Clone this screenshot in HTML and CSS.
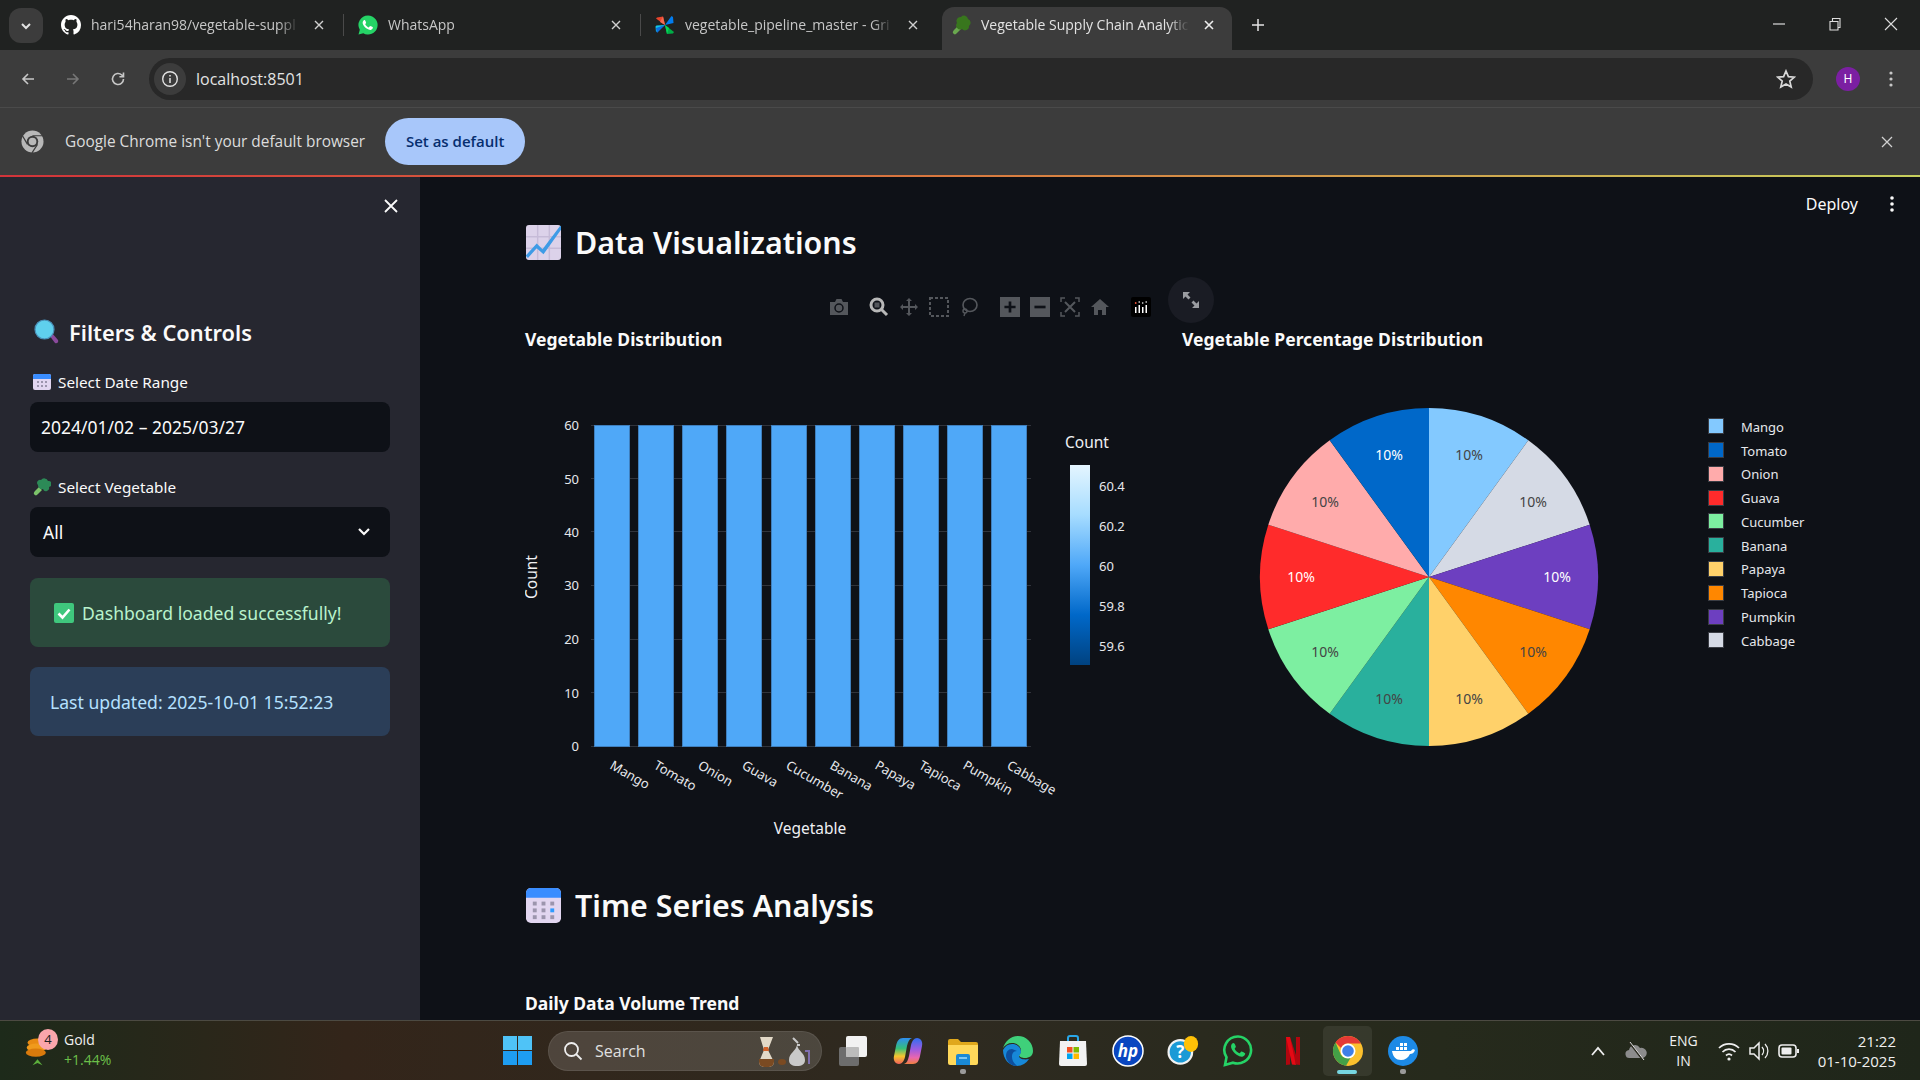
FILE: index.html
```html
<!DOCTYPE html>
<html>
<head>
    <meta charset="utf-8">
    <title>Vegetable Supply Chain Analytics</title>
    <link rel="stylesheet" href="styles.css">
</head>
<body>
<div class="screen">

    <!-- browser tabs -->
    <div class="tabstrip">
        <div class="tab-list">
            <svg width="14" height="14" viewBox="0 0 14 14"><path d="M3 5l4 4 4-4" fill="none" stroke="#e3e3e3" stroke-width="2"/></svg>
        </div>
        <div class="tab">
            <svg class="tab-icon" viewBox="0 0 16 16"><path fill="#fff" d="M8 0C3.58 0 0 3.58 0 8c0 3.54 2.29 6.53 5.47 7.59.4.07.55-.17.55-.38 0-.19-.01-.82-.01-1.49-2.01.37-2.53-.49-2.69-.94-.09-.23-.48-.94-.82-1.13-.28-.15-.68-.52-.01-.53.63-.01 1.08.58 1.23.82.72 1.21 1.87.87 2.33.66.07-.52.28-.87.51-1.07-1.78-.2-3.64-.89-3.64-3.95 0-.87.31-1.59.82-2.15-.08-.2-.36-1.02.08-2.12 0 0 .67-.21 2.2.82.64-.18 1.32-.27 2-.27s1.36.09 2 .27c1.53-1.04 2.2-.82 2.2-.82.44 1.1.16 1.92.08 2.12.51.56.82 1.27.82 2.15 0 3.07-1.87 3.75-3.65 3.95.29.25.54.73.54 1.48 0 1.07-.01 1.93-.01 2.2 0 .21.15.46.55.38A8.01 8.01 0 0 0 16 8c0-4.42-3.58-8-8-8z"/></svg>
            <span class="tab-title">hari54haran98/vegetable-suppl</span>
            <svg class="tab-close" viewBox="0 0 12 12"><path d="M2 2l8 8M10 2l-8 8" stroke="#d0d0d0" stroke-width="1.4"/></svg>
        </div>
        <div class="tab">
            <svg class="tab-icon" viewBox="0 0 20 20"><path fill="#25d366" d="M10 .5a9.5 9.5 0 0 0-8.2 14.3L.5 19.5l4.8-1.3A9.5 9.5 0 1 0 10 .5z"/><path fill="#fff" d="M6.8 4.9c-.3 0-.8.1-1.2.6-.5.6-1.2 1.7-.8 3.2.5 1.7 1.9 3.6 3.8 4.9 1.9 1.3 3.6 1.6 4.6 1.2 1-.4 1.7-1.3 1.7-2.2 0-.4-2.4-1.6-2.8-1.5-.4.1-.9 1.2-1.3 1.3-.6.1-3.3-1.8-3.6-3.2 0-.4.9-1 .9-1.5 0-.3-.9-2.8-1.3-2.800z"/></svg>
            <span class="tab-title">WhatsApp</span>
            <svg class="tab-close" viewBox="0 0 12 12"><path d="M2 2l8 8M10 2l-8 8" stroke="#d0d0d0" stroke-width="1.4"/></svg>
        </div>
        <div class="tab">
            <svg class="tab-icon" viewBox="0 0 20 20"><path fill="#e8452c" d="M10 10L1 3.500 2 2.500 8 1.500z"/><path fill="#f26a52" d="M10 10L5 7l3-5.500z"/><path fill="#017cee" d="M10 10l6.500-9 1.500 1 .5 6z"/><path fill="#11c7e8" d="M10 10L1 17l-.5-5.500 1-1z"/><path fill="#0a6fe0" d="M10 10l-8 8L1 13z"/><path fill="#00ad46" d="M10 10l9 7-1 1.500-6 .5z"/><path fill="#04d659" d="M10 10l4 3-2 6z"/></svg>
            <span class="tab-title">vegetable_pipeline_master - Gri</span>
            <svg class="tab-close" viewBox="0 0 12 12"><path d="M2 2l8 8M10 2l-8 8" stroke="#d0d0d0" stroke-width="1.4"/></svg>
        </div>
        <div class="tab tab-active">
            <svg class="tab-icon" viewBox="0 0 20 20"><path fill="#6aa84f" d="M3 19c-2-1-1-3 0-4l4-4 3 3-4 4c-1 1-2 2-3 1z"/><path fill="#38761d" d="M6 8a4 4 0 0 1 4-6 4 4 0 0 1 7 2 4 4 0 0 1 1 7 4 4 0 0 1-7 3 4 4 0 0 1-5-6z"/></svg>
            <span class="tab-title">Vegetable Supply Chain Analytic</span>
            <svg class="tab-close" viewBox="0 0 12 12"><path d="M2 2l8 8M10 2l-8 8" stroke="#eee" stroke-width="1.6"/></svg>
        </div>
        <svg class="new-tab" viewBox="0 0 14 14"><path d="M7 1v12M1 7h12" stroke="#e3e3e3" stroke-width="1.5"/></svg>
        <div class="window-controls">
            <svg viewBox="0 0 14 14"><path d="M1 7h12" stroke="#ddd" stroke-width="1.2"/></svg>
            <svg viewBox="0 0 14 14"><path d="M2 4.5h8v8.5h-8zM4.5 4.5v-3h7.5v9h-2" fill="none" stroke="#ddd" stroke-width="1.1"/></svg>
            <svg viewBox="0 0 14 14"><path d="M1 1l12 12M13 1l-12 12" stroke="#ddd" stroke-width="1.1"/></svg>
        </div>
    </div>

    <!-- address bar -->
    <div class="toolbar">
        <svg class="nav-icon" viewBox="0 0 16 16"><path d="M14 8H3M8 3L3 8l5 5" fill="none" stroke="#c7c7c7" stroke-width="1.6"/></svg>
        <svg class="nav-icon" viewBox="0 0 16 16"><path d="M2 8h11M8 3l5 5-5 5" fill="none" stroke="#777" stroke-width="1.6"/></svg>
        <svg class="nav-icon" viewBox="0 0 16 16"><path d="M13.5 8A5.5 5.5 0 1 1 11.8 4L13.5 5.6M13.5 1.5v4.2H9.4" fill="none" stroke="#c7c7c7" stroke-width="1.6"/></svg>
        <div class="omnibox">
            <div class="site-info">
                <svg width="18" height="18" viewBox="0 0 18 18"><circle cx="9" cy="9" r="7.3" fill="none" stroke="#e3e3e3" stroke-width="1.4"/><path d="M9 8v5M9 5v1.6" stroke="#e3e3e3" stroke-width="1.5"/></svg>
            </div>
            <span class="url">localhost:8501</span>
            <svg class="star" viewBox="0 0 20 20"><path d="M10 2l2.4 5.6 6 .5-4.6 4 1.4 5.9L10 14.9 4.800 18l1.400-5.900-4.600-4 6-.5z" fill="none" stroke="#d8d8d8" stroke-width="1.7"/></svg>
        </div>
        <div class="avatar">H</div>
        <svg class="menu-dots" viewBox="0 0 4 18"><circle cx="2" cy="3" r="1.6"/><circle cx="2" cy="9" r="1.6"/><circle cx="2" cy="15" r="1.6"/></svg>
    </div>

    <!-- default browser notice -->
    <div class="infobar">
        <svg class="chrome-mono" viewBox="0 0 24 24"><circle cx="12" cy="12" r="11.500" fill="#b8b8b8"/><circle cx="12" cy="12" r="6" fill="#3c3c3c"/><circle cx="12" cy="12" r="4" fill="#b8b8b8"/><path d="M12 6h11M6.800 15L1.500 6M17.200 15L11.500 23.800" stroke="#3c3c3c" stroke-width="1.300" fill="none"/></svg>
        <span class="infobar-text">Google Chrome isn't your default browser</span>
        <div class="infobar-btn">Set as default</div>
        <svg class="infobar-close" viewBox="0 0 12 12"><path d="M1 1l10 10M11 1L1 11" stroke="#d0d0d0" stroke-width="1.3"/></svg>
    </div>
    <div class="rainbow"></div>

    <!-- streamlit app -->
    <div class="app">
        <div class="sidebar">
            <svg class="side-close" viewBox="0 0 16 16"><path d="M2 2l12 12M14 2L2 14" stroke="#fafafa" stroke-width="1.800"/></svg>
            <div class="side-head">
                <svg class="emoji-lg" viewBox="0 0 26 26"><path d="M15 16l3-2 6 7c1 2-1 4-3 3z" fill="#8a4a9c"/><circle cx="10.500" cy="10.500" r="9.500" fill="#5fd0ee"/><circle cx="10.500" cy="10.500" r="9.500" fill="none" stroke="#4a90b8" stroke-width="1.200"/></svg>
                <span>Filters &amp; Controls</span>
            </div>
            <div class="field-label">
                <svg class="emoji-sm" viewBox="0 0 18 16"><rect width="18" height="16" rx="2" fill="#e2d6f0"/><path d="M0 5V2a2 2 0 0 1 2-2h14a2 2 0 0 1 2 2v3z" fill="#3a8dff"/><g fill="#9c95ad"><rect x="4" y="7" width="2" height="2"/><rect x="8" y="7" width="2" height="2"/><rect x="12" y="7" width="2" height="2"/><rect x="4" y="11" width="2" height="2"/><rect x="8" y="11" width="2" height="2"/><rect x="12" y="11" width="2" height="2"/></g></svg>
                Select Date Range
            </div>
            <div class="field">2024/01/02 – 2025/03/27</div>
            <div class="field-label">
                <svg class="emoji-sm" viewBox="0 0 18 18"><path d="M2 17c-2-1-1-3 0-4l4-4 3 3-4 4c-1 1-2 2-3 1z" fill="#7cc36a"/><path d="M5 7a3 3 0 0 1 3-5 4 4 0 0 1 7 1 3 3 0 0 1 1 6 3 3 0 0 1-6 2 4 4 0 0 1-5-4z" fill="#2c8a57"/></svg>
                Select Vegetable
            </div>
            <div class="field field-select">
                All
                <svg width="14" height="10" viewBox="0 0 14 10"><path d="M2 2l5 5 5-5" fill="none" stroke="#fafafa" stroke-width="2.200"/></svg>
            </div>
            <div class="alert alert-success">
                <svg class="emoji-check" viewBox="0 0 20 20"><rect width="20" height="20" rx="2" fill="#3fc77d"/><path d="M4.500 10.500l4 4 7-8" fill="none" stroke="#fff" stroke-width="2.600"/></svg>
                Dashboard loaded successfully!
            </div>
            <div class="alert alert-info">Last updated: 2025-10-01 15:52:23</div>
        </div>

        <div class="main">
            <div class="deploy-bar">
                <span>Deploy</span>
                <svg width="4" height="16" viewBox="0 0 4 16"><g fill="#fafafa"><circle cx="2" cy="2" r="1.800"/><circle cx="2" cy="8" r="1.800"/><circle cx="2" cy="14" r="1.800"/></g></svg>
            </div>

            <h2 class="section-title">
                <svg class="emoji-h2" viewBox="0 0 36 36"><rect width="36" height="36" rx="3" fill="#dcd2ea"/><path d="M0 12h36M0 24h36M12 0v36M24 0v36" stroke="#c6bbd8" stroke-width="1.500"/><path d="M0 32V31L11 19l6 6L35 1h1v4L18 30l-7-6L2 34z" fill="#3e9be6"/></svg>
                Data Visualizations
            </h2>

            <div class="charts">
                <div class="chart-col">
                    <div class="chart-title">Vegetable Distribution</div>
                    <svg class="chart" viewBox="525 352 641 510">
                        <defs>
                            <linearGradient id="scale" x1="0" y1="0" x2="0" y2="1">
                                <stop offset="0" stop-color="#e4f5ff"/>
                                <stop offset=".25" stop-color="#a6dcff"/>
                                <stop offset=".5" stop-color="#4fa8f8"/>
                                <stop offset=".75" stop-color="#0068c9"/>
                                <stop offset="1" stop-color="#004280"/>
                            </linearGradient>
                        </defs>
                        <g stroke="#31343c" stroke-width="1">
                            <path d="M591 425.500h440M591 478.500h440M591 531.500h440M591 585.500h440M591 639.500h440M591 692.500h440M591 746.500h440"/>
                        </g>
                        <g fill="#4fa8f8" stroke="#3f7fbd" stroke-width="1">
                            <rect x="594.500" y="425.500" width="35" height="321"/>
                            <rect x="638.500" y="425.500" width="35" height="321"/>
                            <rect x="682.500" y="425.500" width="35" height="321"/>
                            <rect x="726.500" y="425.500" width="35" height="321"/>
                            <rect x="771.500" y="425.500" width="35" height="321"/>
                            <rect x="815.500" y="425.500" width="35" height="321"/>
                            <rect x="859.500" y="425.500" width="35" height="321"/>
                            <rect x="903.500" y="425.500" width="35" height="321"/>
                            <rect x="947.500" y="425.500" width="35" height="321"/>
                            <rect x="991.500" y="425.500" width="35" height="321"/>
                        </g>
                        <g class="tick" text-anchor="end">
                            <text x="579" y="430">60</text>
                            <text x="579" y="484">50</text>
                            <text x="579" y="537">40</text>
                            <text x="579" y="590">30</text>
                            <text x="579" y="644">20</text>
                            <text x="579" y="698">10</text>
                            <text x="579" y="751">0</text>
                        </g>
                        <g class="tick">
                            <text transform="translate(609 768) rotate(30)">Mango</text>
                            <text transform="translate(653 768) rotate(30)">Tomato</text>
                            <text transform="translate(697 768) rotate(30)">Onion</text>
                            <text transform="translate(741 768) rotate(30)">Guava</text>
                            <text transform="translate(785 768) rotate(30)">Cucumber</text>
                            <text transform="translate(829 768) rotate(30)">Banana</text>
                            <text transform="translate(874 768) rotate(30)">Papaya</text>
                            <text transform="translate(918 768) rotate(30)">Tapioca</text>
                            <text transform="translate(962 768) rotate(30)">Pumpkin</text>
                            <text transform="translate(1006 768) rotate(30)">Cabbage</text>
                        </g>
                        <text class="axis" x="810" y="834" text-anchor="middle">Vegetable</text>
                        <text class="axis" transform="translate(537 577) rotate(-90)" text-anchor="middle">Count</text>
                        <text class="axis" x="1065" y="448">Count</text>
                        <rect x="1070" y="465" width="20" height="200" fill="url(#scale)"/>
                        <g class="tick">
                            <text x="1099" y="491">60.4</text>
                            <text x="1099" y="531">60.2</text>
                            <text x="1099" y="571">60</text>
                            <text x="1099" y="611">59.8</text>
                            <text x="1099" y="651">59.6</text>
                        </g>
                    </svg>
                    <!-- plotly modebar -->
                    <div class="modebar">
                        <svg class="mb mb-cam" viewBox="0 0 20 18"><path d="M1 4h5l1.500-3h5L14 4h5v13H1z" fill="#54575c"/><circle cx="10" cy="10" r="4" fill="none" stroke="#0e1117" stroke-width="1.500"/></svg>
                        <svg class="mb mb-active" viewBox="0 0 20 20"><circle cx="8" cy="8" r="6" fill="none" stroke="#b8b8b8" stroke-width="3"/><rect x="5.500" y="5.500" width="5" height="5" fill="#54575c"/><path d="M12 12l6 6" stroke="#b8b8b8" stroke-width="3"/></svg>
                        <svg class="mb" viewBox="0 0 20 20"><path d="M10 1l3 3h-2v5h5V7l3 3-3 3v-2h-5v5h2l-3 3-3-3h2v-5H4v2l-3-3 3-3v2h5V4H7z" fill="#54575c"/></svg>
                        <svg class="mb" viewBox="0 0 20 20"><path d="M1 1h18v18H1z" fill="none" stroke="#54575c" stroke-width="2" stroke-dasharray="3 2"/></svg>
                        <svg class="mb" viewBox="0 0 20 20"><ellipse cx="11" cy="8" rx="7" ry="6.500" fill="none" stroke="#54575c" stroke-width="1.600"/><circle cx="6" cy="14" r="2" fill="none" stroke="#54575c" stroke-width="1.400"/><path d="M6 16l-1 3" stroke="#54575c" stroke-width="1.400"/></svg>
                        <svg class="mb mb-gap" viewBox="0 0 18 18"><rect width="18" height="18" fill="#54575c"/><path d="M9 4v10M4 9h10" stroke="#0e1117" stroke-width="2.400"/></svg>
                        <svg class="mb" viewBox="0 0 18 18"><rect width="18" height="18" fill="#54575c"/><path d="M4 9h10" stroke="#0e1117" stroke-width="2.400"/></svg>
                        <svg class="mb" viewBox="0 0 20 20"><path d="M5 1H1v4M15 1h4v4M5 19H1v-4M15 19h4v-4" fill="none" stroke="#54575c" stroke-width="1.500"/><path d="M5 5l10 10M15 5L5 15" stroke="#54575c" stroke-width="2"/></svg>
                        <svg class="mb" viewBox="0 0 20 20"><path d="M10 2L1 10h3v8h4v-5h4v5h4v-8h3z" fill="#54575c"/></svg>
                        <svg class="mb mb-logo" viewBox="0 0 20 20"><rect width="20" height="20" rx="2" fill="#000"/><g fill="#fff"><rect x="4" y="10" width="1.500" height="6"/><rect x="7.500" y="8" width="1.500" height="8"/><rect x="11" y="10" width="1.500" height="6"/><rect x="14.500" y="8" width="1.500" height="8"/></g><g fill="#ef553b"><circle cx="4.700" cy="6" r=".9"/></g><g fill="#fff"><circle cx="8.200" cy="5" r=".8"/><circle cx="11.700" cy="6" r=".8"/><circle cx="15.200" cy="5" r=".8"/></g></svg>
                    </div>
                    <div class="fullscreen-btn">
                        <svg width="20" height="20" viewBox="0 0 20 20"><path d="M2 2h7L6.500 4.500l3 3-2 2-3-3L2 9zM18 18h-7l2.500-2.500-3-3 2-2 3 3L18 11z" fill="#9a9ca1"/></svg>
                    </div>
                </div>

                <div class="chart-col">
                    <div class="chart-title">Vegetable Percentage Distribution</div>
                    <svg class="chart" viewBox="1182 352 640 510">
                        <g transform="translate(1429 577)">
                            <path fill="#83c9ff" d="M0 0L0 -169A169 169 0 0 1 99.300 -136.700Z"/>
                            <path fill="#d5dae5" d="M0 0L99.300 -136.700A169 169 0 0 1 160.700 -52.200Z"/>
                            <path fill="#6d3fc0" d="M0 0L160.700 -52.200A169 169 0 0 1 160.700 52.200Z"/>
                            <path fill="#ff8700" d="M0 0L160.700 52.200A169 169 0 0 1 99.300 136.700Z"/>
                            <path fill="#ffd16a" d="M0 0L99.300 136.700A169 169 0 0 1 0 169Z"/>
                            <path fill="#29b09d" d="M0 0L0 169A169 169 0 0 1 -99.300 136.700Z"/>
                            <path fill="#7defa1" d="M0 0L-99.300 136.700A169 169 0 0 1 -160.700 52.200Z"/>
                            <path fill="#ff2b2b" d="M0 0L-160.700 52.200A169 169 0 0 1 -160.700 -52.200Z"/>
                            <path fill="#ffabab" d="M0 0L-160.700 -52.200A169 169 0 0 1 -99.300 -136.700Z"/>
                            <path fill="#0068c9" d="M0 0L-99.300 -136.700A169 169 0 0 1 0 -169Z"/>
                            <g class="pie-label" text-anchor="middle">
                                <text x="40" y="-117">10%</text>
                                <text x="104" y="-70">10%</text>
                                <text class="pie-light" x="128" y="5">10%</text>
                                <text x="104" y="80">10%</text>
                                <text x="40" y="127">10%</text>
                                <text x="-40" y="127">10%</text>
                                <text x="-104" y="80">10%</text>
                                <text class="pie-light" x="-128" y="5">10%</text>
                                <text x="-104" y="-70">10%</text>
                                <text class="pie-light" x="-40" y="-117">10%</text>
                            </g>
                        </g>
                        <g stroke="#3a3d44" stroke-width="1">
                            <rect x="1708.500" y="418.500" width="15" height="15" fill="#83c9ff"/>
                            <rect x="1708.500" y="442.500" width="15" height="15" fill="#0068c9"/>
                            <rect x="1708.500" y="466.500" width="15" height="15" fill="#ffabab"/>
                            <rect x="1708.500" y="490.500" width="15" height="15" fill="#ff2b2b"/>
                            <rect x="1708.500" y="513.500" width="15" height="15" fill="#7defa1"/>
                            <rect x="1708.500" y="537.500" width="15" height="15" fill="#29b09d"/>
                            <rect x="1708.500" y="561.500" width="15" height="15" fill="#ffd16a"/>
                            <rect x="1708.500" y="585.500" width="15" height="15" fill="#ff8700"/>
                            <rect x="1708.500" y="609.500" width="15" height="15" fill="#6d3fc0"/>
                            <rect x="1708.500" y="632.500" width="15" height="15" fill="#d5dae5"/>
                        </g>
                        <g class="tick">
                            <text x="1741" y="432">Mango</text>
                            <text x="1741" y="456">Tomato</text>
                            <text x="1741" y="479">Onion</text>
                            <text x="1741" y="503">Guava</text>
                            <text x="1741" y="527">Cucumber</text>
                            <text x="1741" y="551">Banana</text>
                            <text x="1741" y="574">Papaya</text>
                            <text x="1741" y="598">Tapioca</text>
                            <text x="1741" y="622">Pumpkin</text>
                            <text x="1741" y="646">Cabbage</text>
                        </g>
                    </svg>
                </div>
            </div>

            <h2 class="section-title section-two">
                <svg class="emoji-h2" viewBox="0 0 36 36"><rect width="36" height="36" rx="5" fill="#e2d6f0"/><path d="M0 10V5a5 5 0 0 1 5-5h26a5 5 0 0 1 5 5v5z" fill="#3a8dff"/><g fill="#9c95ad"><rect x="7" y="14" width="4" height="4"/><rect x="16" y="14" width="4" height="4"/><rect x="25" y="14" width="4" height="4"/><rect x="7" y="21" width="4" height="4"/><rect x="16" y="21" width="4" height="4"/><rect x="25" y="21" width="4" height="4" fill="#2f9bff"/><rect x="7" y="28" width="4" height="4"/><rect x="16" y="28" width="4" height="4"/><rect x="25" y="28" width="4" height="4"/></g></svg>
                Time Series Analysis
            </h2>
            <div class="chart-title trend-title">Daily Data Volume Trend</div>
        </div>
    </div>

    <!-- windows taskbar -->
    <div class="taskbar">
        <div class="widget">
            <svg class="widget-icon" viewBox="0 0 30 38"><ellipse cx="15" cy="9" rx="12" ry="5" fill="#e88a12"/><ellipse cx="14" cy="15" rx="12" ry="5" fill="#f09a1c"/><ellipse cx="13" cy="21" rx="12" ry="5" fill="#d97a0c"/><path d="M9 36l6-7 6 7-6-2.500z" fill="#5cae3c"/></svg>
            <div class="widget-badge">4</div>
            <div class="widget-text">
                <div>Gold</div>
                <div class="widget-up">+1.44%</div>
            </div>
        </div>

        <svg class="win-logo" viewBox="0 0 29 29"><path d="M0 0h14v14H0z" fill="#4fc3f7"/><path d="M15 0h14v14H15z" fill="#4fc3f7"/><path d="M0 15h14v14H0z" fill="#1e9df2"/><path d="M15 15h14v14H15z" fill="#1e9df2"/></svg>
        <div class="search">
            <svg width="20" height="20" viewBox="0 0 20 20"><circle cx="8.500" cy="8.500" r="6.500" fill="none" stroke="#eee" stroke-width="1.800"/><path d="M13 13l5.500 5.500" stroke="#eee" stroke-width="1.800"/></svg>
            <span>Search</span>
            <svg class="search-art" viewBox="0 0 54 32"><path d="M3 2h13l-5 13 6 12a5 5 0 0 1-5 5H7a5 5 0 0 1-5-5l5-12z" fill="#e2d9c8"/><path d="M2 24h15v3a5 5 0 0 1-5 5H7a5 5 0 0 1-5-5z" fill="#7a4a22"/><path d="M7 12l4 0 1 4-6 0z" fill="#d2622a"/><ellipse cx="25" cy="27" rx="4" ry="3" fill="#7a4a22"/><path d="M40 10c-1 6-8 8-8 15 0 4 3 6 8 6s8-2 8-6c0-7-7-9-8-15z" fill="#c9c9c9"/><path d="M36 3l5 5M40 10h3" stroke="#c9c9c9" stroke-width="2"/><path d="M48 16h4v13" fill="none" stroke="#7f6fb0" stroke-width="2"/></svg>
        </div>

        <div class="task-icons">
            <div class="task-icon">
                <svg viewBox="0 0 30 32"><rect x="1" y="12" width="20" height="19" rx="2" fill="#6d6d6d"/><rect x="8" y="1" width="21" height="21" rx="2" fill="#f2f2f2"/><rect x="8" y="12" width="13" height="10" rx="1" fill="#bcbcbc"/></svg>
            </div>
            <div class="task-icon">
                <svg viewBox="0 0 32 32">
                    <defs>
                        <linearGradient id="copilotLeft" x1="0" y1="0" x2="0" y2="1">
                            <stop offset="0" stop-color="#2f8df0"/>
                            <stop offset=".4" stop-color="#35c07a"/>
                            <stop offset=".7" stop-color="#f6c52e"/>
                            <stop offset="1" stop-color="#f0605a"/>
                        </linearGradient>
                        <linearGradient id="copilotRight" x1="0" y1="0" x2="0" y2="1">
                            <stop offset="0" stop-color="#2f6ff0"/>
                            <stop offset=".45" stop-color="#a05be0"/>
                            <stop offset=".75" stop-color="#e866b0"/>
                            <stop offset="1" stop-color="#f08040"/>
                        </linearGradient>
                    </defs>
                    <path fill="url(#copilotLeft)" d="M11 3h9c-3 1-4 4-5 8l-2 11c-1 4-3 7-6 7-4 0-6-4-5-8l2-10c1-5 3-8 7-8z"/>
                    <path fill="url(#copilotRight)" d="M21 29h-9c3-1 4-4 5-8l2-11c1-4 3-7 6-7 4 0 6 4 5 8l-2 10c-1 5-3 8-7 8z"/>
                </svg>
            </div>
            <div class="task-icon">
                <svg viewBox="0 0 32 32"><path d="M1 6a2 2 0 0 1 2-2h8l3 3h15a2 2 0 0 1 2 2v6H1z" fill="#e0a81c"/><path d="M1 10h30v18a2 2 0 0 1-2 2H3a2 2 0 0 1-2-2z" fill="#ffd85a"/><path d="M9 21a2 2 0 0 1 2-2h10a2 2 0 0 1 2 2v9H9z" fill="#1a89d6"/><path d="M12 23h8" stroke="#9fdcff" stroke-width="1.500"/></svg>
                <i class="task-dot"></i>
            </div>
            <div class="task-icon">
                <svg viewBox="0 0 32 32"><path d="M16 1a15 15 0 0 1 15 15c0 5-4 7-8 7-3 0-6-1-6-3 0-1 2-1 2-4 0-5-4-8-9-8-4 0-7 2-9 5C3 7 8 1 16 1z" fill="#3fd07a"/><path d="M1 15c2-4 5-6 9-6 5 0 9 3 9 8 0 2-2 3-2 4 0 3 5 4 10 3a15 15 0 0 1-12 7C7 31 1 24 1 15z" fill="#1788d8"/><path d="M10 14c-4 0-6 3-6 7 0 5 5 10 11 10 1 0-5-3-5-9 0-3 1-6 5-6z" fill="#0d4f9e"/></svg>
            </div>
            <div class="task-icon">
                <svg viewBox="0 0 30 32"><path d="M10 7V3a2 2 0 0 1 2-2h6a2 2 0 0 1 2 2v4" fill="none" stroke="#29a7e8" stroke-width="2"/><path d="M2 6h26l1 23a2 2 0 0 1-2 2H3a2 2 0 0 1-2-2z" fill="#f2f2f2"/><rect x="9" y="12" width="5.500" height="5.500" fill="#f25022"/><rect x="15.500" y="12" width="5.500" height="5.500" fill="#7fba00"/><rect x="9" y="18.500" width="5.500" height="5.500" fill="#00a4ef"/><rect x="15.500" y="18.500" width="5.500" height="5.500" fill="#ffb900"/></svg>
            </div>
            <div class="task-icon">
                <svg viewBox="0 0 32 32"><circle cx="16" cy="16" r="15" fill="#0a46c0" stroke="#fff" stroke-width="1.500"/><text class="hp-mark" x="16" y="22" text-anchor="middle">hp</text></svg>
            </div>
            <div class="task-icon">
                <svg viewBox="0 0 36 34"><circle cx="15" cy="18" r="14.500" fill="#f2f2f2"/><circle cx="15" cy="18" r="12" fill="#1b9ad6"/><text class="help-mark" x="15" y="25" text-anchor="middle">?</text><ellipse cx="27" cy="9" rx="8" ry="9" fill="#ffc107"/></svg>
            </div>
            <div class="task-icon">
                <svg viewBox="0 0 30 32"><path d="M15 1.500a13.500 13.500 0 0 0-11.500 20.800L2 30l8-2.300A13.500 13.500 0 1 0 15 1.500z" fill="none" stroke="#25d366" stroke-width="2.600"/><path fill="#25d366" d="M10.500 8c-.5 0-1 .2-1.500.8-.7.800-1.300 2.300-.7 4.300.7 2.300 2.700 4.900 5.300 6.700 2.600 1.800 4.900 2.200 6.300 1.700 1.400-.5 2.300-1.800 2.300-3 0-.5-3.300-2.200-3.800-2.100-.5.100-1.200 1.600-1.800 1.800-.8.100-4.500-2.500-4.900-4.400 0-.5 1.200-1.400 1.200-2 0-.4-1.200-3.800-2.400-3.800z"/></svg>
            </div>
            <div class="task-icon">
                <svg viewBox="0 0 16 28" class="netflix"><path d="M1 0h4l6 18V0h4v28l-4-.5L5 10v17.500L1 28z" fill="#b1060f"/><path d="M1 0h4l6 28-4-.5z" fill="#e50914"/></svg>
            </div>
            <div class="task-icon task-current">
                <svg viewBox="0 0 32 32"><circle cx="16" cy="16" r="15" fill="#fbc02d"/><path d="M16 1a15 15 0 0 1 13 7.500H16a7.500 7.500 0 0 0-7 4.500L3.500 7.500A15 15 0 0 1 16 1z" fill="#e53935"/><path d="M9 20l-5.500-12.500A15 15 0 0 0 14 30.800L19 22a7.500 7.500 0 0 1-10-2z" fill="#43a047"/><circle cx="16" cy="16" r="7.500" fill="#fff"/><circle cx="16" cy="16" r="5.800" fill="#3f7fe8"/></svg>
                <i class="task-bar"></i>
            </div>
            <div class="task-icon">
                <svg viewBox="0 0 32 32"><circle cx="16" cy="16" r="15" fill="#1d8ae6"/><path d="M5 16h19c1-2 3-2 4-1-1 3-3 4-5 4-2 4-5 6-9 6-5 0-8-3-9-9z" fill="#fff"/><g fill="#fff"><rect x="9" y="12" width="3" height="3"/><rect x="13" y="12" width="3" height="3"/><rect x="17" y="12" width="3" height="3"/><rect x="13" y="8" width="3" height="3"/><rect x="17" y="8" width="3" height="3"/></g></svg>
                <i class="task-dot"></i>
            </div>
        </div>

        <div class="tray">
            <svg class="tray-caret" viewBox="0 0 16 10"><path d="M2 9l6-7 6 7" fill="none" stroke="#eee" stroke-width="1.800"/></svg>
            <svg class="tray-cloud" viewBox="0 0 22 20"><path d="M5 17a4 4 0 0 1-1-8 6 6 0 0 1 11-2 5 5 0 0 1 3 10z" fill="#8c8c8c"/><path d="M4 1l14 18" stroke="#2a2a1f" stroke-width="2"/><path d="M5 1l14 18" stroke="#ddd" stroke-width="1"/></svg>
            <div class="tray-lang">ENG<br>IN</div>
            <svg class="tray-icon" viewBox="0 0 22 20"><g fill="none" stroke="#eee" stroke-width="1.700"><path d="M1 7a14 14 0 0 1 20 0"/><path d="M4.500 11a9 9 0 0 1 13 0"/><path d="M8 14.500a4.500 4.500 0 0 1 6 0"/></g><circle cx="11" cy="18" r="1.600" fill="#eee"/></svg>
            <svg class="tray-icon" viewBox="0 0 22 20"><path d="M2 7h4l5-5v16l-5-5H2z" fill="none" stroke="#eee" stroke-width="1.500"/><path d="M14 6a6 6 0 0 1 0 8M17 3a10 10 0 0 1 0 14" fill="none" stroke="#eee" stroke-width="1.300"/></svg>
            <svg class="tray-icon" viewBox="0 0 22 20"><rect x="1" y="4" width="17" height="12" rx="3" fill="none" stroke="#eee" stroke-width="1.600"/><rect x="3.500" y="6.500" width="10" height="7" rx="1" fill="#eee"/><rect x="19" y="8" width="2" height="4" fill="#eee"/></svg>
            <div class="tray-clock">21:22<br>01-10-2025</div>
        </div>
    </div>
</div>
</body>
</html>
```

FILE: styles.css
```css
* {
    box-sizing: border-box;
}
html, body {
    margin: 0;
    height: 100%;
    background: #0e1117;
}
body {
    font-family: "Noto Sans", sans-serif;
    color: #fafafa;
    overflow: hidden;
}
svg {
    display: block;
    flex: none;
}
.screen {
    width: 1920px;
    height: 1080px;
    display: flex;
    flex-direction: column;
    overflow: hidden;
}

/* browser tabs */
.tabstrip {
    height: 50px;
    flex: none;
    display: flex;
    background: #202221;
    padding-top: 7px;
    padding-left: 9px;
    font-family: "Open Sans", sans-serif;
    font-size: 14px;
}
.tab-list {
    width: 34px;
    height: 35px;
    margin-top: 1px;
    margin-right: 3px;
    border-radius: 12px;
    background: #3c3c3c;
    display: flex;
    align-items: center;
    justify-content: center;
}
.tab {
    width: 297px;
    height: 43px;
    padding: 0 0 8px 15px;
    display: flex;
    align-items: center;
    color: #c7c7c7;
    position: relative;
}
.tab + .tab::before {
    content: "";
    position: absolute;
    left: 0;
    top: 7px;
    height: 22px;
    width: 1px;
    background: #4a4a4a;
}
.tab-active {
    width: 290px;
    margin-left: 5px;
    padding-left: 9px;
    background: #3c3c3c;
    border-radius: 12px 12px 0 0;
    color: #e3e3e3;
}
.tab-active::before {
    display: none;
}
.tab-icon {
    width: 20px;
    height: 20px;
    margin-right: 10px;
}
.tab-title {
    width: 208px;
    white-space: nowrap;
    -webkit-mask-image: linear-gradient(90deg, #000 90%, transparent);
    mask-image: linear-gradient(90deg, #000 90%, transparent);
}
.tab-close {
    width: 12px;
    height: 12px;
    margin-left: 14px;
}
.new-tab {
    width: 14px;
    height: 14px;
    margin: 11px 0 0 19px;
}
.window-controls {
    margin-left: auto;
    display: flex;
    gap: 42px;
    padding: 10px 22px 0 0;
}
.window-controls svg {
    width: 14px;
    height: 14px;
}

/* address bar */
.toolbar {
    height: 58px;
    flex: none;
    display: flex;
    align-items: center;
    background: #3c3c3c;
    border-bottom: 1px solid #4a4a4a;
    padding: 0 0 0 20px;
}
.nav-icon {
    width: 16px;
    height: 16px;
    margin-right: 29px;
}
.omnibox {
    width: 1664px;
    height: 42px;
    margin-left: -6px;
    border-radius: 21px;
    background: #282828;
    display: flex;
    align-items: center;
    padding: 0 17px 0 5px;
}
.site-info {
    width: 32px;
    height: 32px;
    border-radius: 50%;
    background: #3c3c3c;
    display: flex;
    align-items: center;
    justify-content: center;
}
.url {
    margin-left: 10px;
    font-family: "Open Sans", sans-serif;
    font-size: 16px;
    color: #e3e3e3;
}
.star {
    width: 20px;
    height: 20px;
    margin-left: auto;
}
.avatar {
    width: 24px;
    height: 24px;
    margin-left: 23px;
    border-radius: 50%;
    background: #7b1fa2;
    font-size: 12px;
    line-height: 24px;
    text-align: center;
    color: #fff;
}
.menu-dots {
    width: 4px;
    height: 18px;
    margin-left: 29px;
    fill: #c7c7c7;
}

/* default browser notice */
.infobar {
    height: 67px;
    flex: none;
    display: flex;
    align-items: center;
    background: #3c3c3c;
    padding-left: 21px;
    font-family: "Open Sans", sans-serif;
}
.chrome-mono {
    width: 23px;
    height: 23px;
}
.infobar-text {
    margin-left: 21px;
    font-size: 15.4px;
    color: #dcdcdc;
}
.infobar-btn {
    margin-left: 20px;
    width: 140px;
    height: 47px;
    border-radius: 24px;
    background: #a8c7fa;
    color: #062e6f;
    font-size: 15px;
    font-weight: 600;
    line-height: 47px;
    text-align: center;
}
.infobar-close {
    width: 12px;
    height: 12px;
    margin-left: auto;
    margin-right: 27px;
}
.rainbow {
    height: 2px;
    flex: none;
    background: linear-gradient(90deg, #d2343a, #d9793f 50%, #c6cf5d);
}

/* app */
.app {
    flex: 1;
    min-height: 0;
    display: flex;
}
.sidebar {
    width: 420px;
    flex: none;
    background: #262730;
    padding: 0 30px;
    position: relative;
}
.side-close {
    position: absolute;
    left: 383px;
    top: 21px;
    width: 16px;
    height: 16px;
}
.side-head {
    display: flex;
    align-items: center;
    gap: 9px;
    margin-top: 139px;
    margin-bottom: 23px;
    height: 32px;
    font-size: 21.8px;
    font-weight: 600;
}
.emoji-lg {
    width: 26px;
    height: 26px;
    margin-left: 4px;
}
.field-label {
    display: flex;
    align-items: center;
    gap: 7px;
    height: 22px;
    margin-left: 3px;
    font-size: 15.3px;
    color: #fafafa;
}
.emoji-sm {
    width: 18px;
    height: 18px;
}
.field {
    height: 50px;
    margin: 9px 0 24px;
    border-radius: 8px;
    background: #0e1117;
    padding: 0 11px;
    display: flex;
    align-items: center;
    font-size: 17.5px;
}
.field-select {
    justify-content: space-between;
    padding: 0 19px 0 13px;
    margin-bottom: 21px;
}
.alert {
    height: 69px;
    margin-bottom: 20px;
    border-radius: 8px;
    padding-left: 20px;
    display: flex;
    align-items: center;
    font-size: 17.6px;
}
.alert-success {
    background: #2b4a3c;
    color: #b9f2cc;
    padding-left: 24px;
}
.alert-info {
    background: #2b3e58;
    color: #b5e1ff;
}
.emoji-check {
    width: 20px;
    height: 20px;
    margin-right: 8px;
}

/* main area */
.main {
    flex: 1;
    min-width: 0;
    padding-left: 105px;
    position: relative;
    overflow: hidden;
}
.deploy-bar {
    position: absolute;
    right: 26px;
    top: 16px;
    display: flex;
    align-items: center;
    gap: 32px;
    font-size: 16px;
}
.section-title {
    margin: 44px 0 0;
    height: 42px;
    display: flex;
    align-items: center;
    gap: 14px;
    font-size: 30.4px;
    font-weight: 600;
}
.emoji-h2 {
    width: 35px;
    height: 35px;
    margin-left: 1px;
}
.charts {
    display: grid;
    grid-template-columns: 641px 640px;
    gap: 16px;
    margin-top: 63px;
}
.chart-col {
    position: relative;
}
.chart-title {
    height: 26px;
    font-size: 17.5px;
    font-weight: 700;
    line-height: 26px;
}
.chart {
    width: 100%;
    height: 510px;
}
.tick text {
    font-size: 13px;
    fill: #e6e8ec;
}
.axis {
    font-size: 15.5px;
    fill: #eef0f3;
}
.pie-label text {
    font-size: 14px;
    fill: #444;
}
.pie-label .pie-light {
    fill: #fff;
}
.modebar {
    position: absolute;
    left: 304px;
    top: -29px;
    display: flex;
    align-items: center;
    gap: 10px;
}
.mb {
    width: 20px;
    height: 20px;
}
.mb-active {
    margin-left: 10px;
}
.mb-gap {
    margin-left: 11px;
}
.mb-logo {
    margin-left: 11px;
}
.fullscreen-btn {
    position: absolute;
    left: 643px;
    top: -49px;
    width: 46px;
    height: 46px;
    border-radius: 50%;
    background: #1a1c24;
    display: flex;
    align-items: center;
    justify-content: center;
}
.section-two {
    margin-top: 22px;
}
.trend-title {
    margin-top: 64px;
}

/* taskbar */
.taskbar {
    height: 60px;
    flex: none;
    display: flex;
    align-items: center;
    position: relative;
    border-top: 1px solid #4c4a42;
    background: linear-gradient(90deg, #1d2a1a, #33251a 18%, #2e2a20 50%, #262a1c 75%, #1f261a);
    font-family: "Open Sans", sans-serif;
    color: #f0f0f0;
}
.widget {
    width: 503px;
    flex: none;
    height: 100%;
    display: flex;
    align-items: center;
    padding-left: 25px;
    position: relative;
    font-size: 14px;
    line-height: 20px;
}
.widget-icon {
    width: 25px;
    height: 36px;
}
.widget-badge {
    position: absolute;
    left: 38px;
    top: 8px;
    width: 20px;
    height: 21px;
    border-radius: 50%;
    background: #fba6ac;
    color: #222;
    font-size: 13px;
    line-height: 21px;
    text-align: center;
}
.widget-text {
    margin-left: 14px;
    margin-top: -2px;
}
.widget-up {
    color: #6cc04a;
}
.win-logo {
    width: 29px;
    height: 29px;
}
.search {
    width: 274px;
    height: 40px;
    margin-left: 16px;
    border-radius: 20px;
    background: rgba(255, 255, 255, .14);
    border: 1px solid rgba(255, 255, 255, .08);
    display: flex;
    align-items: center;
    padding: 0 8px 0 14px;
    font-size: 16px;
    color: #e0e0e0;
}
.search span {
    margin-left: 12px;
}
.search-art {
    width: 58px;
    height: 32px;
    margin-left: auto;
}
.task-icons {
    display: flex;
    margin-left: 3px;
}
.task-icon {
    width: 55px;
    height: 50px;
    display: flex;
    align-items: center;
    justify-content: center;
    position: relative;
}
.task-icon svg {
    width: 32px;
    height: 32px;
}
.task-icon .netflix {
    width: 16px;
    height: 28px;
}
.task-current::before {
    content: "";
    position: absolute;
    left: 3px;
    right: 3px;
    top: 0;
    bottom: 0;
    background: rgba(255, 255, 255, .07);
    border-radius: 5px;
}
.task-current svg {
    position: relative;
}
.task-dot {
    position: absolute;
    left: 25px;
    bottom: 2px;
    width: 6px;
    height: 5px;
    border-radius: 2px;
    background: #9a9a9a;
}
.task-bar {
    position: absolute;
    left: 17px;
    bottom: 2px;
    width: 20px;
    height: 4px;
    border-radius: 2px;
    background: #76d6e0;
}
.hp-mark {
    font-size: 17px;
    font-weight: 700;
    font-style: italic;
    fill: #fff;
}
.help-mark {
    font-size: 19px;
    font-weight: 700;
    fill: #fff;
}
.tray {
    margin-left: auto;
    display: flex;
    align-items: center;
    padding-right: 24px;
}
.tray-caret {
    width: 16px;
    height: 10px;
}
.tray-cloud {
    width: 22px;
    height: 20px;
    margin-left: 19px;
}
.tray-lang {
    margin-left: 22px;
    font-size: 14px;
    line-height: 20px;
    text-align: center;
}
.tray-icon {
    width: 22px;
    height: 20px;
    margin-left: 8px;
}
.tray-lang + .tray-icon {
    margin-left: 20px;
}
.tray-clock {
    margin-left: 18px;
    font-size: 15px;
    line-height: 20px;
    text-align: right;
}
```
